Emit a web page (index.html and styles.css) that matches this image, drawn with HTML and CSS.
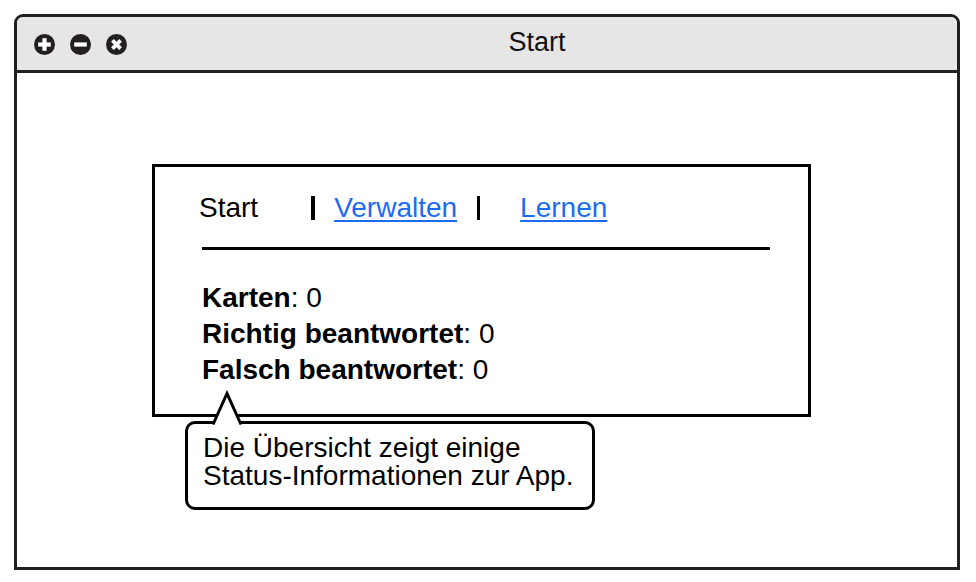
FILE: index.html
```html
<!DOCTYPE html>
<html lang="de">
<head>
<meta charset="utf-8">
<title>Start</title>
<link rel="stylesheet" href="styles.css">
</head>
<body>
<div class="window">
  <div class="titlebar">
    <div class="controls">
      <svg class="ctl" width="21" height="21" viewBox="0 0 20 20"><circle cx="10" cy="10" r="10" fill="#231f20"/><rect x="4" y="8" width="12" height="4" fill="#fff"/><rect x="8" y="4" width="4" height="12" fill="#fff"/></svg>
      <svg class="ctl" width="21" height="21" viewBox="0 0 20 20"><circle cx="10" cy="10" r="10" fill="#231f20"/><rect x="4" y="8" width="12" height="4" fill="#fff"/></svg>
      <svg class="ctl" width="21" height="21" viewBox="0 0 20 20"><circle cx="10" cy="10" r="10" fill="#231f20"/><g transform="rotate(45 10 10)"><rect x="4.5" y="8.2" width="11" height="3.6" fill="#fff"/><rect x="8.2" y="4.5" width="3.6" height="11" fill="#fff"/></g></svg>
    </div>
    <div class="title">Start</div>
  </div>
  <div class="content">
    <div class="panel">
      <nav class="tabs">
        <span class="tab tab-start">Start</span>
        <span class="sep sep-1"></span>
        <a class="tab tab-link tab-verwalten" href="#">Verwalten</a>
        <span class="sep sep-2"></span>
        <a class="tab tab-link tab-lernen" href="#">Lernen</a>
      </nav>
      <div class="rule"></div>
      <div class="stats">
        <div class="stat"><b>Karten</b>: 0</div>
        <div class="stat"><b>Richtig beantwortet</b>: 0</div>
        <div class="stat"><b>Falsch beantwortet</b>: 0</div>
      </div>
    </div>
    <div class="callout">
      <svg class="pointer" width="46" height="37" viewBox="0 0 46 37"><polygon points="8,35 22,3 36,35" fill="#fff"/><polyline points="8,34.5 22,3.5 36,34.5" fill="none" stroke="#000" stroke-width="3" stroke-linejoin="miter"/></svg>
      <div class="callout-text">Die Übersicht zeigt einige<br>Status-Informationen zur App.</div>
    </div>
  </div>
</div>
</body>
</html>
```

FILE: styles.css
```css
html, body {
  margin: 0;
  padding: 0;
  background: #fff;
}

body {
  font-family: "Liberation Sans", Arial, Helvetica, sans-serif;
  color: #000;
}

.window {
  margin: 14px 0 0 14px;
  width: 946px;
  height: 556px;
  box-sizing: border-box;
  border: 3px solid #231f20;
  border-radius: 9px 9px 0 0;
  display: flex;
  flex-direction: column;
  background: #fff;
}

.titlebar {
  height: 53px;
  flex: none;
  background: #e6e6e6;
  border-bottom: 3px solid #231f20;
  border-radius: 6px 6px 0 0;
  display: flex;
  align-items: center;
}

.controls {
  display: flex;
  gap: 15px;
  padding-left: 17px;
  padding-top: 1px;
}

.ctl {
  display: block;
}

.title {
  flex: 1;
  text-align: center;
  font-size: 27px;
  line-height: 30px;
  padding-right: 10px;
  padding-bottom: 3px;
  color: #111;
}

.content {
  flex: 1;
  position: relative;
  padding: 91px 0 0 135px;
}

.panel {
  width: 659px;
  height: 253px;
  box-sizing: border-box;
  border: 3px solid #000;
  padding: 23px 0 0 47px;
}

.tabs {
  display: flex;
  align-items: center;
  height: 36px;
  line-height: 36px;
  font-size: 28px;
  margin-left: -3px;
}

.tab {
  color: #000;
}

.tab-link {
  color: #1b6cf2;
  text-decoration: underline;
  text-decoration-thickness: 2px;
  text-underline-offset: 3px;
}

.sep {
  display: block;
  width: 4px;
  height: 24px;
  background: #000;
}

.sep-1 {
  margin-left: 53px;
}

.tab-verwalten {
  margin-left: 19px;
}

.sep-2 {
  margin-left: 20px;
  width: 3px;
}

.tab-lernen {
  margin-left: 40px;
}

.rule {
  width: 568px;
  height: 3px;
  background: #000;
  margin-top: 21px;
}

.stats {
  margin-top: 30px;
  font-size: 28px;
  line-height: 36px;
}

.callout {
  position: absolute;
  left: 168px;
  top: 348px;
  width: 410px;
  height: 89px;
  box-sizing: border-box;
  border: 3px solid #000;
  border-radius: 10px;
  background: #fff;
  padding: 10px 0 0 15px;
}

.pointer {
  position: absolute;
  left: 17px;
  top: -34px;
  display: block;
}

.callout-text {
  font-size: 28px;
  line-height: 28px;
}
```
